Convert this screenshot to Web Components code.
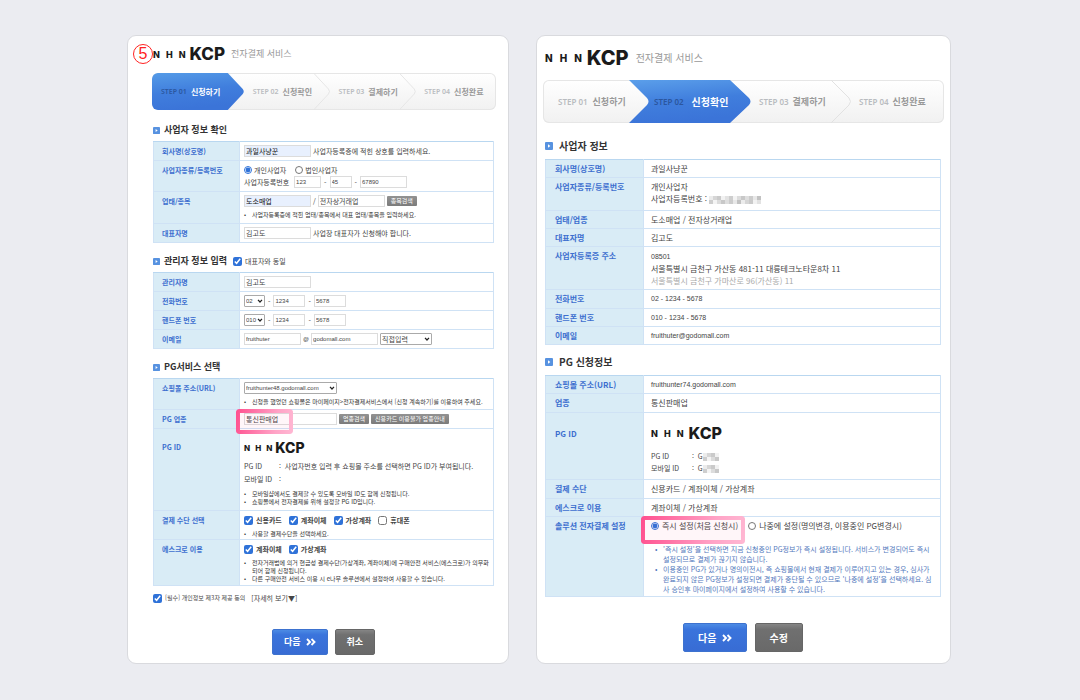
<!DOCTYPE html>
<html lang="ko">
<head>
<meta charset="utf-8">
<meta name="viewport" content="width=device-width, initial-scale=1">
<title>NHN KCP 전자결제 서비스</title>
<style>
  body {
    margin: 0;
    background: #ebecf1;
    font-family: "Noto Sans CJK KR", "Liberation Sans", sans-serif;
  }
</style>
</head>
<body>
<kcp-app></kcp-app>

<script>
// Base class: every element renders its own template once
class KcpElement extends HTMLElement {
  connectedCallback() {
    if (this.shadowRoot) return;
    this.attachShadow({ mode: 'open' });
    this.shadowRoot.innerHTML = this.render();
  }
}

/* Logo */
class KcpLogo extends KcpElement {
  render() {
    return `
      <style>
        :host {
          display: inline-flex;
          align-items: center;
          gap: var(--logo-gap, 4px);
          color: #1b1b1b;
          font-family: Inter, sans-serif;
          line-height: 1;
        }
        .nhn {
          display: flex;
          gap: var(--nhn-gap, 6px);
          font-size: var(--nhn-size, 9px);
          font-weight: 800;
        }
        .kcp {
          font-size: var(--kcp-size, 17px);
          font-weight: 800;
        }
      </style>
      <span class="nhn"><span>N</span><span>H</span><span>N</span></span>
      <span class="kcp">KCP</span>
    `;
  }
}
customElements.define('kcp-logo', KcpLogo);

/* Step bar */
class KcpSteps extends KcpElement {
  render() {
    const names = ['신청하기', '신청확인', '결제하기', '신청완료'];
    const second = this.getAttribute('current') === '2';
    const art = second ? `
      <svg viewBox="0 0 401 43" preserveAspectRatio="none" aria-hidden="true">
        <defs><linearGradient id="g" x1="0" y1="0" x2=".25" y2="1">
          <stop offset="0" stop-color="#5b9fea"/><stop offset=".55" stop-color="#407edd"/><stop offset="1" stop-color="#3b74d8"/>
        </linearGradient></defs>
        <path d="M86 0H187L206 18Q209 21.500 206 25L187 43H86L104 25Q107 21.500 104 18Z" fill="url(#g)"/>
        <path d="M288 0L306 18Q309 21.500 306 25L288 43" fill="none" stroke="#e2e2e2"/>
      </svg>` : `
      <svg viewBox="0 0 345 37" preserveAspectRatio="none" aria-hidden="true">
        <defs><linearGradient id="g" x1="0" y1="0" x2=".25" y2="1">
          <stop offset="0" stop-color="#559be7"/><stop offset=".55" stop-color="#407edd"/><stop offset="1" stop-color="#3b74d8"/>
        </linearGradient></defs>
        <path d="M5 0H76L91 16Q93 18.500 91 21L76 37H5Q0 37 0 32V5Q0 0 5 0Z" fill="url(#g)"/>
        <path d="M162 0L177 16Q179 18.500 177 21L162 37M248 0L263 16Q265 18.500 263 21L248 37" fill="none" stroke="#e6e6e6"/>
      </svg>`;
    return `
      <style>
        :host {
          display: grid;
          height: var(--steps-height, 37px);
        }
        svg, ol {
          grid-area: 1 / 1;
          width: 100%;
          height: 100%;
          box-sizing: border-box;
        }
        svg {
          display: block;
          border-radius: 6px;
          background: linear-gradient(#fff, #f1f1f1);
          box-shadow: inset 0 0 0 1px #e6e6e6;
          min-height: 0;
        }
        ol {
          list-style: none;
          margin: 0;
          padding: 0;
          display: grid;
          grid-template-columns: ${second ? '105fr 102fr 100fr 94fr' : '92fr 86fr 86fr 81fr'};
          align-items: center;
          z-index: 1;
        }
        li {
          display: flex;
          align-items: center;
          gap: 4px;
          padding-left: 9px;
          white-space: nowrap;
          color: #999;
          font-size: var(--step-size, 8px);
          font-weight: 700;
          line-height: 12px;
        }
        span {
          font-family: "Noto Sans", sans-serif;
          font-size: var(--step-no-size, 7px);
          font-weight: 600;
          color: #b9bcc0;
        }
        li.on {
          color: #fff;
          font-size: var(--step-on-size, 8px);
        }
        li.on span { color: #2b569e; }
        ${second ? `
        li:first-child { padding-left: 15px; gap: 5px; }
        li.on { padding-left: 6px; gap: 8px; }` : ''}
      </style>
      ${art}
      <ol>
        ${names.map((name, i) => `<li class="${i === (second ? 1 : 0) ? 'on' : ''}"><span>STEP 0${i + 1}</span>${name}</li>`).join('')}
      </ol>
    `;
  }
}
customElements.define('kcp-steps', KcpSteps);

/* Section heading with the small blue square */
class KcpHeading extends KcpElement {
  render() {
    return `
      <style>
        :host {
          display: flex;
          align-items: center;
          gap: var(--heading-gap, 4px);
          height: var(--heading-height, 22px);
        }
        svg { width: var(--mark-size, 7px); height: var(--mark-size, 7px); }
        h2 {
          margin: 0;
          color: #333;
          font-size: var(--heading-size, 9px);
          font-weight: 700;
          line-height: 14px;
        }
      </style>
      <svg viewBox="0 0 8 8" aria-hidden="true"><rect width="8" height="8" rx="1" fill="#5792e0"/><path d="M3 2.200L5.400 4L3 5.800Z" fill="#fff"/></svg>
      <h2><slot></slot></h2>
      <slot name="extra"></slot>
    `;
  }
}
customElements.define('kcp-heading', KcpHeading);

/* Big button under the tables */
class KcpAction extends KcpElement {
  render() {
    const next = this.hasAttribute('next');
    return `
      <style>
        :host { display: block; }
        button {
          display: flex;
          align-items: center;
          justify-content: center;
          gap: 5px;
          height: var(--action-height, 26px);
          padding: 0 var(--action-pad, 11px);
          border: 1px solid #666;
          border-radius: 2px;
          background: linear-gradient(#858585, #707070 20%, #696969);
          color: #fff;
          font: 700 var(--action-size, 9px)/14px "Noto Sans CJK KR", sans-serif;
        }
        button.next {
          border-color: #3d72cf;
          background: linear-gradient(#4c8be4, #3a74dc 20%, #386cd4);
        }
        svg { width: 10px; height: 8px; }
      </style>
      <button type="button" class="${next ? 'next' : ''}"><slot></slot>${next ? '<svg viewBox="0 0 10 8" aria-hidden="true"><path d="M1 1L4 4L1 7M5.500 1L8.500 4L5.500 7" fill="none" stroke="#fff" stroke-width="1.900"/></svg>' : ''}</button>
    `;
  }
}
customElements.define('kcp-action', KcpAction);

/* Mosaic that hides private numbers */
class KcpMosaic extends KcpElement {
  render() {
    const tones = ['#ececec', '#d6d6d6', '#cacaca', '#f2f2f2', '#e2e2e2', '#cecece', '#f4f4f4', '#dcdcdc', '#c8c8c8', '#dedede', '#cccccc', '#e8e8e8', '#c2c2c2'];
    const count = Number(this.getAttribute('cells'));
    let cells = '';
    for (let i = 0; i < count; i++) {
      cells += `<rect x="${i * 4}" width="4" height="4" fill="${tones[i % 13]}"/><rect x="${i * 4}" y="4" width="4" height="4" fill="${tones[(i + 5) % 13]}"/>`;
    }
    return `
      <style>
        :host { display: inline-block; vertical-align: middle; }
        svg { display: block; }
      </style>
      <svg width="${count * 4}" height="8" aria-hidden="true">${cells}</svg>
    `;
  }
}
customElements.define('kcp-mosaic', KcpMosaic);

/* Styles used by both panels */
const panelStyle = `
  :host {
    display: flex;
    flex-direction: column;
    box-sizing: border-box;
    background: #fff;
    border: 1px solid #d9dade;
    border-radius: 9px;
    color: #444;
  }
  header {
    display: flex;
    align-items: center;
  }
  h1 {
    margin: 0;
    color: #999;
    font-weight: 400;
    line-height: 14px;
  }
  table {
    width: 100%;
    border-collapse: collapse;
    table-layout: fixed;
  }
  th, td {
    box-sizing: border-box;
    border: 1px solid #cfe2f5;
    text-align: left;
    vertical-align: top;
    white-space: nowrap;
  }
  th {
    background: #d9ecf6;
    color: #3d6fcf;
    font-weight: 700;
  }
  tr:first-child > * { border-top-color: #b9d7f0; }
  td { position: relative; }
  ul {
    list-style: none;
    margin: 0;
    padding: 0;
  }
  li { display: flex; }
  li::before { content: "•"; flex: none; width: 8px; }
  label { display: inline-flex; align-items: center; gap: 3px; }
  input[type=checkbox], input[type=radio] {
    flex: none;
    margin: 0;
    width: 9px;
    height: 9px;
    accent-color: #2f72d8;
  }
  input[type=radio] { width: 8px; height: 8px; }
  .mark {
    position: absolute;
    top: -1px;
    border-radius: 3px;
    background: rgba(255, 80, 140, 0.05);
    pointer-events: none;
  }
  .mark::before {
    content: "";
    position: absolute;
    inset: 0;
    border-radius: 3px;
    padding: 4px;
    background: linear-gradient(100deg, #ff4f8e, #ffa3c6 70%, #ffb8d3);
    -webkit-mask: linear-gradient(#000 0 0) content-box exclude, linear-gradient(#000 0 0);
    mask: linear-gradient(#000 0 0) content-box exclude, linear-gradient(#000 0 0);
  }
  .actions {
    display: flex;
    justify-content: center;
  }
  dl { display: grid; margin: 0; }
  dt, dd { margin: 0; }
`;

/* Left panel: application form */
class KcpFormPanel extends KcpElement {
  render() {
    return `
      <style>
        ${panelStyle}
        :host { font-size: 7px; }
        header { height: 36px; padding-left: 5px; gap: 6px; }
        .no {
          box-sizing: border-box;
          width: 20px;
          height: 20px;
          margin-right: -6px;
          border: 1px solid #f22;
          border-radius: 50%;
          color: #f22;
          font: 16px/18px "Liberation Sans", sans-serif;
          text-align: center;
        }
        h1 { font-size: 9px; }
        kcp-steps { margin: 1px 12px 9px 24px; }
        .body { padding: 0 14px 8px 25px; }
        section { margin-bottom: 7px; }
        .w-label { width: 86px; }
        th { padding: 0 0 0 8px; line-height: 18px; }
        td { padding: 3px 0 0 4px; line-height: 12px; }
        .row { display: flex; align-items: center; gap: 2px; height: 12px; }
        input[type=text], select {
          box-sizing: border-box;
          height: 12px;
          margin: 0;
          padding: 0 1px;
          border: 1px solid #dcdcdc;
          border-radius: 0;
          background: #fff;
          color: #444;
          font: 7px/10px "Noto Sans CJK KR", sans-serif;
        }
        .w67 { width: 67px; }
        .w57 { width: 57px; }
        .w32 { width: 32px; }
        .w93 { width: 93px; }
        .w27 { width: 27px; }
        .w22 { width: 22px; }
        .w47 { width: 47px; }
        .w20 { width: 21px; }
        .w52 { width: 52px; }
        input.filled { background: #e8f0fe; color: #111; }
        input.num, select.num, .at { font-size: 6px; font-family: "Liberation Sans", sans-serif; }
        .reg { padding-right: 3px; }
        .dash { padding: 0 1px; }
        select {
          appearance: none;
          border-color: #aaa;
          border-radius: 1px;
          background: #fff url("data:image/svg+xml,%3Csvg xmlns='http://www.w3.org/2000/svg' viewBox='0 0 6 4'%3E%3Cpath d='M1 .8L3 3L5 .8' fill='none' stroke='%23222' stroke-width='1.2'/%3E%3C/svg%3E") no-repeat right 1px center / 6px 4px;
        }
        .small {
          height: 10px;
          padding: 0 4px;
          border: 0;
          border-radius: 1px;
          background: linear-gradient(#929292, #7b7b7b);
          color: #fff;
          font: 6px/10px "Noto Sans CJK KR", sans-serif;
        }
        ul { font-size: 6px; line-height: 8px; padding-top: 4px; color: #333; }
        .checks { display: flex; align-items: center; gap: 7px; height: 12px; font-weight: 700; }
        .types { display: flex; gap: 9px; height: 12px; }
        .types label { gap: 2px; }
        .pgid th { line-height: 36px; }
        .pgid td { padding-top: 12px; }
        kcp-logo.mini { --kcp-size: 14px; --nhn-size: 8px; --nhn-gap: 5px; --logo-gap: 3px; display: flex; }
        dl { grid-template-columns: 35px 1fr; line-height: 13px; padding-top: 5px; }
        kcp-heading label { padding-left: 2px; }
        .mark { left: -4px; width: 57px; height: 25px; }
        .agree { display: flex; align-items: center; gap: 6px; font-size: 6px; line-height: 10px; }
        .agree a { color: inherit; text-decoration: none; font-size: 7px; }
        .actions { gap: 7px; padding-top: 26px; }
        .h18 { height: 18px; }
        .h19 { height: 19px; }
        .h29 { height: 29px; }
        .h31 { height: 31px; }
        .h32 { height: 32px; }
        .h46 { height: 46px; }
        .h82 { height: 82px; }
      </style>
      <header>
        <span class="no">5</span>
        <kcp-logo></kcp-logo>
        <h1>전자결제 서비스</h1>
      </header>
      <kcp-steps current="1"></kcp-steps>
      <div class="body">
        <section>
          <kcp-heading>사업자 정보 확인</kcp-heading>
          <table>
            <colgroup><col class="w-label"><col></colgroup>
            <tr class="h18"><th><label for="company">회사명(상호명)</label></th><td><div class="row"><input type="text" id="company" class="w67 filled" value="과일사냥꾼"><span>사업자등록증에 적힌 상호를 입력하세요.</span></div></td></tr>
            <tr class="h31"><th>사업자종류/등록번호</th><td>
              <div class="types">
                <label><input type="radio" name="type" checked>개인사업자</label>
                <label><input type="radio" name="type">법인사업자</label>
              </div>
              <div class="row"><label for="reg" class="reg">사업자등록번호</label><input type="text" id="reg" class="w27 num" value="123"><span class="dash">-</span><input type="text" class="w22 num" value="45" aria-label="등록번호 2"><span class="dash">-</span><input type="text" class="w47 num" value="67890" aria-label="등록번호 3"></div>
            </td></tr>
            <tr class="h32"><th><label for="biz">업태/종목</label></th><td>
              <div class="row"><input type="text" id="biz" class="w67 filled" value="도소매업">/<input type="text" class="w67" value="전자상거래업" aria-label="종목"><button type="button" class="small">종목검색</button></div>
              <ul><li>사업자등록증에 적힌 업태/종목에서 대표 업태/종목을 입력하세요.</li></ul>
            </td></tr>
            <tr class="h19"><th><label for="ceo">대표자명</label></th><td><div class="row"><input type="text" id="ceo" class="w67" value="김고도"><span>사업장 대표자가 신청해야 합니다.</span></div></td></tr>
          </table>
        </section>
        <section>
          <kcp-heading>관리자 정보 입력<label slot="extra"><input type="checkbox" checked>대표자와 동일</label></kcp-heading>
          <table>
            <colgroup><col class="w-label"><col></colgroup>
            <tr class="h18"><th><label for="manager">관리자명</label></th><td><div class="row"><input type="text" id="manager" class="w67" value="김고도"></div></td></tr>
            <tr class="h19"><th><label for="tel">전화번호</label></th><td><div class="row"><select id="tel" class="w20 num"><option>02</option></select><span class="dash">-</span><input type="text" class="w32 num" value="1234" aria-label="전화번호 2"><span class="dash">-</span><input type="text" class="w32 num" value="5678" aria-label="전화번호 3"></div></td></tr>
            <tr class="h18"><th><label for="phone">핸드폰 번호</label></th><td><div class="row"><select id="phone" class="w20 num"><option>010</option></select><span class="dash">-</span><input type="text" class="w32 num" value="1234" aria-label="핸드폰 번호 2"><span class="dash">-</span><input type="text" class="w32 num" value="5678" aria-label="핸드폰 번호 3"></div></td></tr>
            <tr class="h18"><th><label for="mail">이메일</label></th><td><div class="row"><input type="text" id="mail" class="w57 num" value="fruithuter"><span class="at">@</span><input type="text" class="w67 num" value="godomall.com" aria-label="메일 도메인"><select class="w52" aria-label="도메인 선택"><option>직접입력</option></select></div></td></tr>
          </table>
        </section>
        <section>
          <kcp-heading>PG서비스 선택</kcp-heading>
          <table>
            <colgroup><col class="w-label"><col></colgroup>
            <tr class="h31"><th><label for="url">쇼핑몰 주소(URL)</label></th><td>
              <div class="row"><select id="url" class="w93 num"><option>fruithunter48.godomall.com</option></select></div>
              <ul><li>신청을 했었던 쇼핑몰은 마이페이지&gt;전자결제서비스에서 [신청 계속하기]를 이용하여 주세요.</li></ul>
            </td></tr>
            <tr class="h19"><th><label for="kind">PG 업종</label></th><td><div class="row"><input type="text" id="kind" class="w93" value="통신판매업"><button type="button" class="small">업종검색</button><button type="button" class="small">신용카드 이용불가 업종안내</button></div><div class="mark"></div></td></tr>
            <tr class="h82 pgid"><th>PG ID</th><td>
              <kcp-logo class="mini"></kcp-logo>
              <dl><dt>PG ID</dt><dd>: &nbsp;사업자번호 입력 후 쇼핑몰 주소를 선택하면 PG ID가 부여됩니다.</dd><dt>모바일 ID</dt><dd>:</dd></dl>
              <ul><li>모바일샵에서도 결제할 수 있도록 모바일 ID도 함께 신청됩니다.</li><li>쇼핑몰에서 전자결제를 위해 설정할 PG ID입니다.</li></ul>
            </td></tr>
            <tr class="h29"><th>결제 수단 선택</th><td>
              <div class="checks">
                <label><input type="checkbox" checked>신용카드</label>
                <label><input type="checkbox" checked>계좌이체</label>
                <label><input type="checkbox" checked>가상계좌</label>
                <label><input type="checkbox">휴대폰</label>
              </div>
              <ul><li>사용할 결제수단을 선택하세요.</li></ul>
            </td></tr>
            <tr class="h46"><th>에스크로 이용</th><td>
              <div class="checks">
                <label><input type="checkbox" checked>계좌이체</label>
                <label><input type="checkbox" checked>가상계좌</label>
              </div>
              <ul><li><span>전자거래법에 의거 현금성 결제수단(가상계좌, 계좌이체)에 구매안전 서비스(에스크로)가 의무화<br>되어 함께 신청됩니다.</span></li><li>다른 구매안전 서비스 이용 시 e나무 솔루션에서 설정하여 사용할 수 있습니다.</li></ul>
            </td></tr>
          </table>
        </section>
        <div class="agree"><label><input type="checkbox" checked>[필수] 개인정보 제3자 제공 동의</label><a href="#">[자세히 보기▼]</a></div>
        <div class="actions"><kcp-action next>다음</kcp-action><kcp-action>취소</kcp-action></div>
      </div>
    `;
  }
}
customElements.define('kcp-form-panel', KcpFormPanel);

/* Right panel: what was entered, for confirmation */
class KcpConfirmPanel extends KcpElement {
  render() {
    return `
      <style>
        ${panelStyle}
        :host {
          font-size: 8px;
          --kcp-size: 20px;
          --nhn-size: 10px;
          --nhn-gap: 7px;
          --logo-gap: 5px;
          --steps-height: 43px;
          --step-size: 9px;
          --step-on-size: 10px;
          --step-no-size: 8px;
          --heading-size: 10px;
          --heading-gap: 6px;
          --heading-height: 26px;
          --mark-size: 8px;
          --action-size: 10px;
          --action-height: 29px;
          --action-pad: 14px;
        }
        header { height: 44px; padding-left: 8px; gap: 7px; }
        h1 { font-size: 10px; }
        kcp-steps { margin: 0 6px 10px; }
        .body { padding: 0 9px 10px 8px; }
        section { margin-bottom: 4px; }
        .w-label { width: 98px; }
        th, td { padding: 3px 0 0 7px; line-height: 12px; }
        th { padding-left: 9px; }
        p { margin: 0; color: #aaa; }
        .latin { font-size: 7px; font-family: "Liberation Sans", sans-serif; }
        .pgid th { padding-top: 15px; }
        .pgid td { padding-top: 12px; }
        kcp-logo.mini { --kcp-size: 16px; --nhn-size: 9px; --nhn-gap: 6px; display: flex; }
        dl { grid-template-columns: 41px 1fr; padding-top: 9px; font-size: 7px; }
        .mark { left: -3px; width: 104px; height: 28px; }
        .choice { display: flex; gap: 10px; height: 12px; }
        ul { padding-top: 12px; color: #5379bd; font-size: 7px; line-height: 10px; }
        li { padding-left: 4px; }
        .actions { gap: 8px; padding-top: 22px; }
        .h18 { height: 18px; }
        .h19 { height: 19px; }
        .h33 { height: 33px; }
        .h43 { height: 43px; }
        .h67 { height: 67px; }
        .h80 { height: 80px; }
      </style>
      <header>
        <kcp-logo></kcp-logo>
        <h1>전자결제 서비스</h1>
      </header>
      <kcp-steps current="2"></kcp-steps>
      <div class="body">
        <section>
          <kcp-heading>사업자 정보</kcp-heading>
          <table>
            <colgroup><col class="w-label"><col></colgroup>
            <tr class="h18"><th>회사명(상호명)</th><td>과일사냥꾼</td></tr>
            <tr class="h33"><th>사업자종류/등록번호</th><td>개인사업자<br>사업자등록번호 : <kcp-mosaic cells="13"></kcp-mosaic></td></tr>
            <tr class="h18"><th>업태/업종</th><td>도소매업 / 전자상거래업</td></tr>
            <tr class="h18"><th>대표자명</th><td>김고도</td></tr>
            <tr class="h43"><th>사업자등록증 주소</th><td><span class="latin">08501</span><br>서울특별시 금천구 가산동 481-11 대륭테크노타운8차 11<p>서울특별시 금천구 가마산로 96(가산동) 11</p></td></tr>
            <tr class="h19"><th>전화번호</th><td class="latin">02 - 1234 - 5678</td></tr>
            <tr class="h18"><th>핸드폰 번호</th><td class="latin">010 - 1234 - 5678</td></tr>
            <tr class="h18"><th>이메일</th><td class="latin">fruithuter@godomall.com</td></tr>
          </table>
        </section>
        <section>
          <kcp-heading>PG 신청정보</kcp-heading>
          <table>
            <colgroup><col class="w-label"><col></colgroup>
            <tr class="h18"><th>쇼핑몰 주소(URL)</th><td class="latin">fruithunter74.godomall.com</td></tr>
            <tr class="h19"><th>업종</th><td>통신판매업</td></tr>
            <tr class="h67 pgid"><th>PG ID</th><td>
              <kcp-logo class="mini"></kcp-logo>
              <dl><dt>PG ID</dt><dd>: &nbsp;G<kcp-mosaic cells="4"></kcp-mosaic></dd><dt>모바일 ID</dt><dd>: &nbsp;G<kcp-mosaic cells="4"></kcp-mosaic></dd></dl>
            </td></tr>
            <tr class="h19"><th>결제 수단</th><td>신용카드 / 계좌이체 / 가상계좌</td></tr>
            <tr class="h18"><th>에스크로 이용</th><td>계좌이체 / 가상계좌</td></tr>
            <tr class="h80"><th>솔루션 전자결제 설정</th><td>
              <div class="choice">
                <label><input type="radio" name="when" checked>즉시 설정(처음 신청시)</label>
                <label><input type="radio" name="when">나중에 설정(명의변경, 이용중인 PG변경시)</label>
              </div>
              <ul>
                <li><span>'즉시 설정'을 선택하면 지금 신청중인 PG정보가 즉시 설정됩니다. 서비스가 변경되어도 즉시<br>설정되므로 결제가 끊기지 않습니다.</span></li>
                <li><span>이용중인 PG가 있거나 명의이전시, 즉 쇼핑몰에서 현재 결제가 이루어지고 있는 경우, 심사가<br>완료되지 않은 PG정보가 설정되면 결제가 중단될 수 있으므로 '나중에 설정'을 선택하세요. 심<br>사 승인후 마이페이지에서 설정하여 사용할 수 있습니다.</span></li>
              </ul>
              <div class="mark"></div>
            </td></tr>
          </table>
        </section>
        <div class="actions"><kcp-action next>다음</kcp-action><kcp-action>수정</kcp-action></div>
      </div>
    `;
  }
}
customElements.define('kcp-confirm-panel', KcpConfirmPanel);

/* Page */
class KcpApp extends KcpElement {
  render() {
    return `
      <style>
        :host {
          display: grid;
          grid-template-columns: 382fr 415fr;
          gap: 27px;
          max-width: 824px;
          margin: 0 auto;
          padding: 35px 2px 36px 0;
        }
      </style>
      <kcp-form-panel></kcp-form-panel>
      <kcp-confirm-panel></kcp-confirm-panel>
    `;
  }
}
customElements.define('kcp-app', KcpApp);
</script>
</body>
</html>
